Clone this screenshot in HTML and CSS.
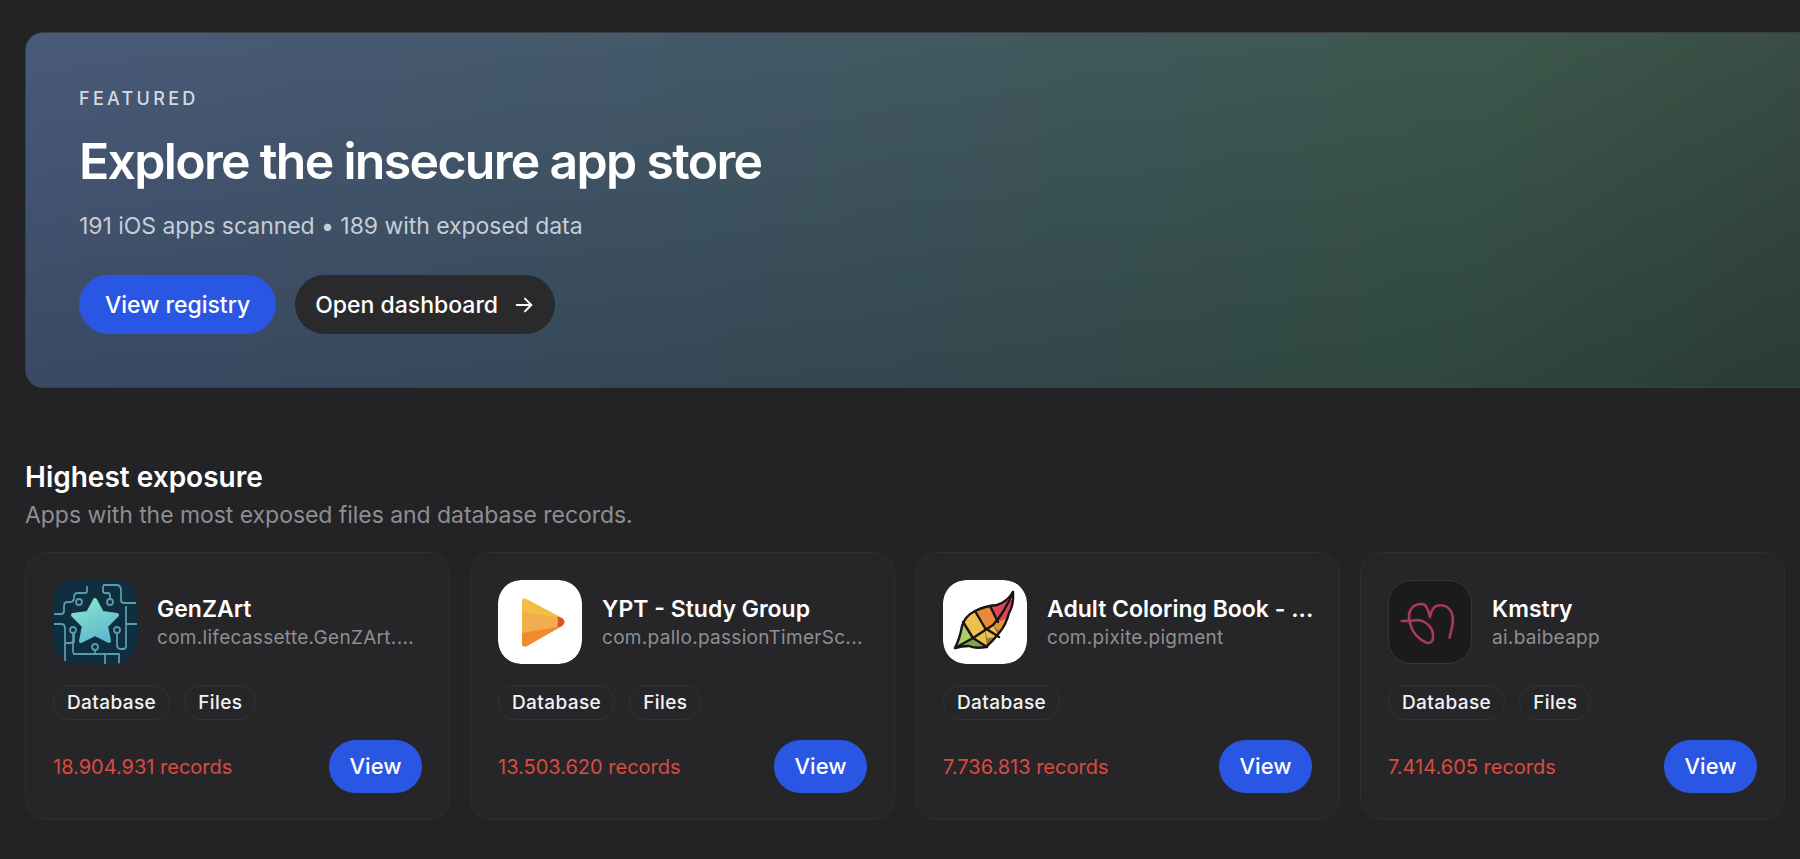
FILE: index.html
```html
<!DOCTYPE html>
<html lang="en">
<head>
    <meta charset="UTF-8">
    <meta name="viewport" content="width=device-width, initial-scale=1.0">
    <title>Insecure App Store</title>
    <link rel="stylesheet" href="styles.css">
</head>
<body>
    <main class="page">
        <section class="hero">
            <div class="eyebrow">FEATURED</div>
            <h1>Explore the insecure app store</h1>
            <p class="hero-sub">191 iOS apps scanned • 189 with exposed data</p>
            <div class="hero-actions">
                <a class="btn btn-primary">View registry</a>
                <a class="btn btn-dark">Open dashboard
                    <svg class="arrow" viewBox="0 0 24 24" fill="none" stroke="currentColor" stroke-width="2" stroke-linecap="round" stroke-linejoin="round"><path d="M4 12h16"/><path d="M13 5l7 7-7 7"/></svg>
                </a>
            </div>
        </section>

        <section class="exposure">
            <h2>Highest exposure</h2>
            <p class="section-sub">Apps with the most exposed files and database records.</p>
            <div class="cards">

                <div class="card">
                    <div class="app">
                        <svg class="app-icon" viewBox="0 0 84 84">
                            <defs>
                                <linearGradient id="starFill" x1="0.2" y1="0" x2="0.7" y2="1">
                                    <stop offset="0" stop-color="#84e6c8"/>
                                    <stop offset="1" stop-color="#5fb6d2"/>
                                </linearGradient>
                            </defs>
                            <rect width="84" height="84" rx="23" fill="#0f2f40"/>
                            <g fill="none" stroke="#5a9ba6" stroke-width="1.8">
                                <path d="M34 6v5q0 2-2 2h-7q-4 0-4 4v1q0 4-4 4h-2q-4 0-4 4v5q0 3-3 3H1"/>
                                <path d="M23 22h0M50 6v5q0 2 2 2h3q2 0 2 3v3"/>
                                <path d="M50 5h13q5 0 5 5v10q0 3 3 3h12"/>
                                <path d="M1 44h7q4 0 4 4v36"/>
                                <path d="M20 53v7q0 2-2 3h-6"/>
                                <path d="M21 53v9h-1v11"/>
                                <path d="M64 53v12q0 4 4 4h2q3 0 3-3V26"/>
                                <path d="M73 44h11"/>
                                <path d="M42 70v4H20"/>
                                <path d="M20 74h46v10M52 74v10"/>
                                <circle cx="26" cy="22" r="3"/>
                                <circle cx="57" cy="22" r="3"/>
                                <circle cx="20" cy="50" r="3"/>
                                <circle cx="64" cy="50" r="3"/>
                                <circle cx="42" cy="67" r="3"/>
                            </g>
                            <path d="M42 20l7 13 15 2-11 11 3 15-14-7-14 7 3-15-11-11 15-2z" fill="url(#starFill)" stroke="url(#starFill)" stroke-width="4" stroke-linejoin="round"/>
                        </svg>
                        <div class="app-text">
                            <div class="app-name">GenZArt</div>
                            <div class="app-bundle">com.lifecassette.GenZArt....</div>
                        </div>
                    </div>
                    <div class="tags"><span class="tag">Database</span><span class="tag">Files</span></div>
                    <div class="card-foot">
                        <span class="records">18.904.931 records</span>
                        <a class="btn-view">View</a>
                    </div>
                </div>

                <div class="card">
                    <div class="app">
                        <svg class="app-icon" viewBox="0 0 84 84">
                            <defs>
                                <clipPath id="playClip">
                                    <path d="M28 19L64 38Q69 42 64 46L29 66Q24 68 24 63V23Q24 17 28 19z"/>
                                </clipPath>
                            </defs>
                            <rect width="84" height="84" rx="23" fill="#fff"/>
                            <g clip-path="url(#playClip)">
                                <rect x="20" y="14" width="50" height="56" fill="#f2ad4c"/>
                                <path d="M20 14h50v24L59 37 24 32l-4 0z" fill="#f5bd43"/>
                                <path d="M20 70h50V46L59 47 24 53l-4 1z" fill="#f08a31"/>
                                <path d="M59 37L70 38V46L59 47q2-5 0-10z" fill="#d9512a"/>
                            </g>
                        </svg>
                        <div class="app-text">
                            <div class="app-name">YPT - Study Group</div>
                            <div class="app-bundle">com.pallo.passionTimerSc...</div>
                        </div>
                    </div>
                    <div class="tags"><span class="tag">Database</span><span class="tag">Files</span></div>
                    <div class="card-foot">
                        <span class="records">13.503.620 records</span>
                        <a class="btn-view">View</a>
                    </div>
                </div>

                <div class="card">
                    <div class="app">
                        <svg class="app-icon" viewBox="0 0 84 84">
                            <defs>
                                <clipPath id="leafClip">
                                    <path d="M12 68q5-10 7-22 3-10 13-15 10-5 22-6 10-3 16-13 1 12-4 21-3 12-10 20-6 8-13 14-10 2-17-1-7 0-14 2z"/>
                                </clipPath>
                            </defs>
                            <rect width="84" height="84" rx="23" fill="#fff"/>
                            <g clip-path="url(#leafClip)">
                                <rect width="84" height="84" fill="#ecc04e"/>
                                <path d="M47 20H74V40L55 42 47 27z" fill="#d9485a"/>
                                <path d="M32 28L47 24 55 42 42 48z" fill="#e98a3b"/>
                                <path d="M55 42L70 36 62 56 50 45z" fill="#e9903a"/>
                                <path d="M42 52L50 45 62 56 50 72 44 67z" fill="#8f7a3d"/>
                                <path d="M42 48L50 45 56 57 44 58z" fill="#f0c04a"/>
                                <path d="M8 72L20 42 30 58z" fill="#a8cf68"/>
                                <path d="M8 72L30 58 44 67 40 76z" fill="#7fa64d"/>
                            </g>
                            <g fill="none" stroke="#1a1213" stroke-width="2.400" stroke-linejoin="round" stroke-linecap="round">
                                <path d="M12 68q5-10 7-22 3-10 13-15 10-5 22-6 10-3 16-13 1 12-4 21-3 12-10 20-6 8-13 14-10 2-17-1-7 0-14 2z"/>
                                <path d="M12 68L30 58 50 45Q62 32 70 12"/>
                                <path d="M32 31L42 48"/>
                                <path d="M20 42L30 58 44 67"/>
                                <path d="M47 26L55 42"/>
                                <path d="M42 48L56 57"/>
                            </g>
                        </svg>
                        <div class="app-text">
                            <div class="app-name">Adult Coloring Book - ...</div>
                            <div class="app-bundle">com.pixite.pigment</div>
                        </div>
                    </div>
                    <div class="tags"><span class="tag">Database</span></div>
                    <div class="card-foot">
                        <span class="records">7.736.813 records</span>
                        <a class="btn-view">View</a>
                    </div>
                </div>

                <div class="card">
                    <div class="app">
                        <svg class="app-icon icon-outlined" viewBox="0 0 84 84">
                            <rect width="84" height="84" rx="23" fill="#1b1b1c"/>
                            <path d="M13 41q10 0 17-1c8 1 15 8 15 15 1 6-2 10-7 8-7-3-14-10-16-18-2-6-3-14 3-19 6-4 12-3 14 2 2 3 2 6 3 9 1-6 3-11 8-12 6-1 11 1 14 7 3 7 1 14-2 26" fill="none" stroke="#a93a58" stroke-width="2.600" stroke-linecap="round" stroke-linejoin="round"/>
                        </svg>
                        <div class="app-text">
                            <div class="app-name">Kmstry</div>
                            <div class="app-bundle">ai.baibeapp</div>
                        </div>
                    </div>
                    <div class="tags"><span class="tag">Database</span><span class="tag">Files</span></div>
                    <div class="card-foot">
                        <span class="records">7.414.605 records</span>
                        <a class="btn-view">View</a>
                    </div>
                </div>

            </div>
        </section>
    </main>
</body>
</html>
```

FILE: styles.css
```css
html, body {
    margin: 0;
    height: 100%;
    background: #232325;
}
body {
    font-family: Inter, 'Noto Sans', sans-serif;
    color: #fff;
    overflow: hidden;
}
.page {
    padding: 32px 0 0 25px;
}
.hero {
    box-sizing: border-box;
    width: 1900px;
    height: 356px;
    padding: 55px 53px 0;
    border: 1px solid #3c3f44;
    border-radius: 18px;
    background:
        linear-gradient(180deg, rgba(255,255,255,0.04), rgba(0,0,0,0.12)),
        linear-gradient(100deg, #425374 0%, #3b525f 40%, #355145 75%, #2e3f37 100%);
}
.eyebrow {
    font-size: 18px;
    line-height: 22px;
    font-weight: 500;
    letter-spacing: 3.3px;
    color: #d5dae2;
}
h1 {
    margin: 20px 0 0;
    font-size: 50px;
    line-height: 62px;
    font-weight: 600;
    letter-spacing: -1.7px;
}
.hero-sub {
    margin: 19px 0 0;
    font-size: 23px;
    line-height: 30px;
    letter-spacing: -0.05px;
    color: #c6cdd6;
}
.hero-actions {
    display: flex;
    gap: 19px;
    margin-top: 34px;
}
.btn {
    display: flex;
    align-items: center;
    height: 59px;
    padding: 0 26px;
    border-radius: 30px;
    font-size: 23px;
    font-weight: 500;
}
.btn-primary {
    background: #2a56e4;
}
.btn-dark {
    gap: 15px;
    padding: 0 20px;
    background: #2a2a2d;
}
.arrow {
    width: 22px;
    height: 22px;
}
.exposure {
    margin-top: 71px;
}
h2 {
    margin: 0;
    font-size: 28px;
    line-height: 36px;
    font-weight: 600;
}
.section-sub {
    margin: 4px 0 0;
    font-size: 23px;
    line-height: 32px;
    letter-spacing: -0.05px;
    color: #8e8e93;
}
.cards {
    display: grid;
    grid-template-columns: repeat(4, 425px);
    gap: 20px;
    margin-top: 21px;
}
.card {
    box-sizing: border-box;
    height: 268px;
    padding: 27px 27px 0;
    border: 1px solid #2f2f32;
    border-radius: 22px;
    background: #262628;
}
.app {
    display: flex;
    align-items: center;
    gap: 20px;
}
.app-icon {
    flex: none;
    width: 84px;
    height: 84px;
    border-radius: 23px;
}
.icon-outlined {
    border: 1px solid #37373a;
    box-sizing: border-box;
}
.app-text {
    min-width: 0;
    flex: 1;
}
.app-name, .app-bundle {
    white-space: nowrap;
}
.app-name {
    font-size: 23px;
    line-height: 30px;
    font-weight: 600;
}
.app-bundle {
    margin-top: 1px;
    font-size: 19px;
    line-height: 26px;
    letter-spacing: 0.3px;
    color: #8e8e93;
}
.tags {
    display: flex;
    gap: 14px;
    margin-top: 21px;
}
.tag {
    height: 35px;
    padding: 0 13px;
    border: 1px solid #333336;
    border-radius: 18px;
    box-sizing: border-box;
    font-size: 19px;
    line-height: 33px;
    letter-spacing: 0.4px;
    font-weight: 500;
    color: #f2f2f4;
}
.card-foot {
    display: flex;
    align-items: center;
    justify-content: space-between;
    margin-top: 20px;
}
.records {
    font-size: 20px;
    color: #dc4a40;
}
.btn-view {
    display: block;
    width: 93px;
    height: 53px;
    border-radius: 27px;
    background: #2a56e4;
    font-size: 22px;
    font-weight: 500;
    line-height: 53px;
    text-align: center;
}
```
